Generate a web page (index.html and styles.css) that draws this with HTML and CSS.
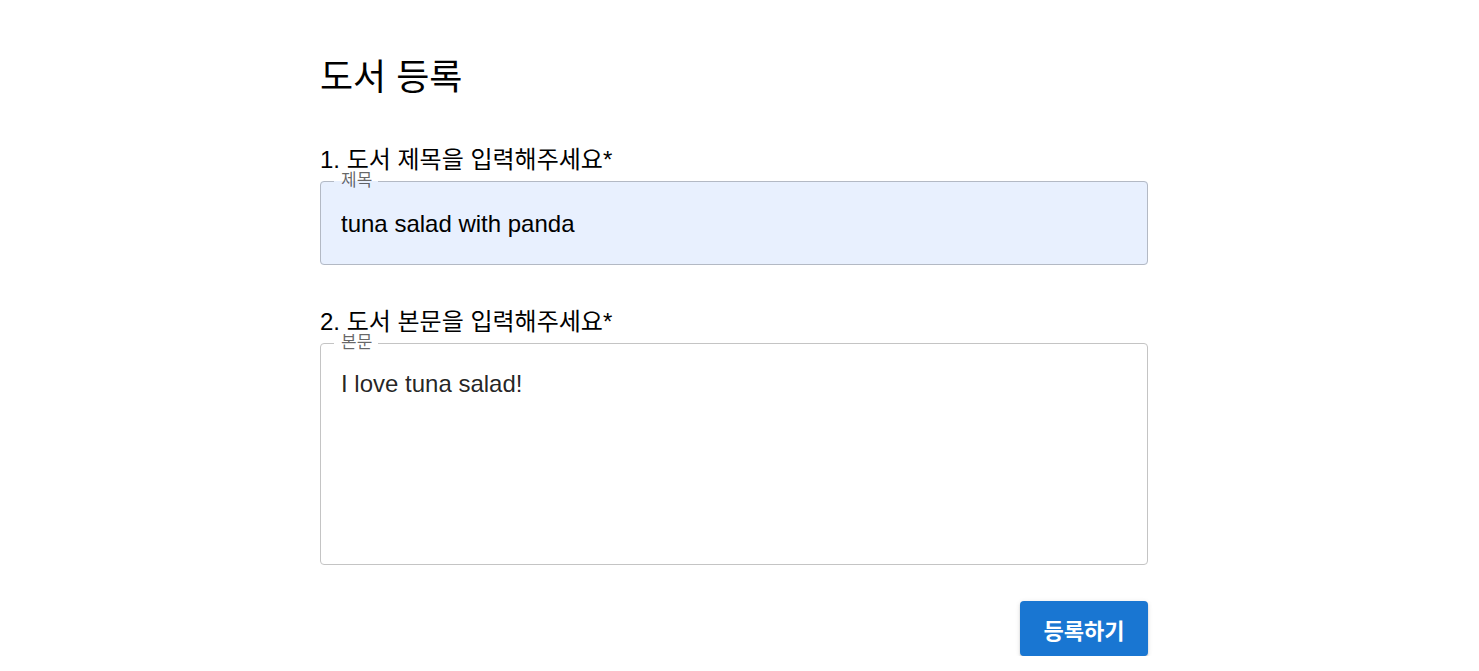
FILE: index.html
```html
<!DOCTYPE html>
<html lang="ko">
<head>
<meta charset="utf-8">
<title>도서 등록</title>
<link rel="stylesheet" href="styles.css">
</head>
<body>
<main class="page">
  <h1 class="title">도서 등록</h1>
  <form class="form">
    <div class="label label-first">1. 도서 제목을 입력해주세요*</div>
    <fieldset class="field field-autofill">
      <legend class="legend">제목</legend>
      <input class="input" type="text" value="tuna salad with panda">
    </fieldset>
    <div class="label label-second">2. 도서 본문을 입력해주세요*</div>
    <fieldset class="field">
      <legend class="legend">본문</legend>
      <textarea class="textarea">I love tuna salad!</textarea>
    </fieldset>
    <div class="actions">
      <button type="button" class="btn">등록하기</button>
    </div>
  </form>
</main>
</body>
</html>
```
FILE: styles.css
```css
html, body {
  margin: 0;
  padding: 0;
  background: #ffffff;
}
body {
  font-family: "Liberation Sans", "Noto Sans CJK KR", Arial, sans-serif;
  color: rgba(0, 0, 0, 0.87);
}
.page {
  width: 828px;
  margin-left: 320px;
  display: flex;
  flex-direction: column;
}
.title {
  margin: 58px 0 0 0;
  font-size: 36px;
  line-height: 40px;
  font-weight: 400;
  color: #000;
}
.form {
  display: flex;
  flex-direction: column;
}
.label {
  font-size: 24px;
  line-height: 28px;
  color: #000;
}
.label-first {
  margin-top: 48px;
}
.label-second {
  margin-top: 43px;
}
.field {
  margin: 0;
  padding: 0 0 0 13px;
  min-width: 0;
  border: 1px solid #c4c4c4;
  border-radius: 4px;
  background: #fff;
}
.field-autofill {
  background: #e8f0fe;
  border-color: #b3b9c4;
}
.legend {
  padding: 0 6px 0 7px;
  font-size: 17px;
  line-height: 14px;
  color: rgba(0, 0, 0, 0.6);
}
.input {
  display: block;
  box-sizing: border-box;
  width: 100%;
  height: 76px;
  margin: 0;
  padding: 0 7px 5px 7px;
  border: none;
  outline: none;
  background: transparent;
  font-family: "Liberation Sans", "Noto Sans CJK KR", Arial, sans-serif;
  font-size: 24px;
  color: #000;
}
.textarea {
  display: block;
  box-sizing: border-box;
  width: 100%;
  height: 214px;
  margin: 0;
  padding: 20px 7px 0 7px;
  border: none;
  outline: none;
  resize: none;
  background: transparent;
  font-family: "Liberation Sans", "Noto Sans CJK KR", Arial, sans-serif;
  font-size: 24px;
  line-height: 28px;
  color: rgba(0, 0, 0, 0.87);
  overflow: hidden;
}
.actions {
  display: flex;
  justify-content: flex-end;
  margin-top: 36px;
}
.btn {
  width: 128px;
  height: 55px;
  border: none;
  border-radius: 4px;
  background: #1976d2;
  color: #fff;
  font-family: "Noto Sans CJK KR", "Liberation Sans", sans-serif;
  font-size: 22px;
  font-weight: 700;
  cursor: pointer;
  box-shadow: 0 3px 1px -2px rgba(0, 0, 0, 0.2), 0 2px 2px 0 rgba(0, 0, 0, 0.14), 0 1px 5px 0 rgba(0, 0, 0, 0.12);
}
```
